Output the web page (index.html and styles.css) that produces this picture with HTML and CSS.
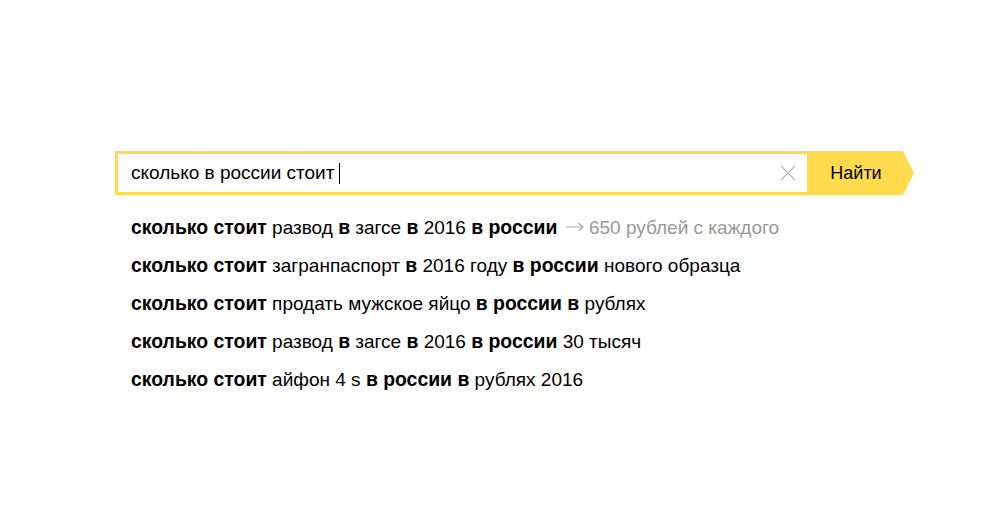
FILE: index.html
```html
<!DOCTYPE html>
<html lang="ru">
<head>
<meta charset="utf-8">
<title>Поиск</title>
<link rel="stylesheet" href="styles.css">
</head>
<body>
<div class="page">
  <form class="search">
    <div class="field">
      <span class="query">сколько в россии стоит</span><span class="caret"></span>
      <span class="clear">
        <svg width="16" height="16" viewBox="0 0 16 16"><path d="M1 1L15 15M15 1L1 15" stroke="#b3b3b3" stroke-width="1.2" fill="none"/></svg>
      </span>
    </div>
    <button class="go" type="button">Найти</button>
  </form>
  <ul class="suggest">
    <li><b>сколько стоит</b> развод <b>в</b> загсе <b>в</b> 2016 <b>в россии</b> <span class="fact"><svg class="arrow" width="18" height="10" viewBox="0 0 18 10"><path d="M0 5H17M12.5 1L17 5L12.5 9" stroke="#a6a6a6" stroke-width="1.1" fill="none"/></svg> 650 рублей с каждого</span></li>
    <li><b>сколько стоит</b> загранпаспорт <b>в</b> 2016 году <b>в россии</b> нового образца</li>
    <li><b>сколько стоит</b> продать мужское яйцо <b>в россии в</b> рублях</li>
    <li><b>сколько стоит</b> развод <b>в</b> загсе <b>в</b> 2016 <b>в россии</b> 30 тысяч</li>
    <li><b>сколько стоит</b> айфон 4 s <b>в россии в</b> рублях 2016</li>
  </ul>
</div>
</body>
</html>
```
FILE: styles.css
```css
html, body {
  margin: 0;
  padding: 0;
  background: #fff;
}
body {
  font-family: "Liberation Sans", Arial, sans-serif;
  color: #000;
}
.page {
  padding: 151px 0 0 115px;
}
.search {
  display: flex;
  height: 44px;
  margin: 0;
}
.field {
  box-sizing: border-box;
  width: 692px;
  height: 44px;
  border: 3px solid #ffdb4d;
  border-right: 0;
  display: flex;
  align-items: center;
  padding-left: 13px;
  font-size: 19px;
}
.query {
  white-space: pre;
}
.caret {
  width: 1px;
  height: 21px;
  background: #000;
  margin-left: 5px;
}
.clear {
  margin-left: auto;
  margin-right: 11px;
  display: flex;
}
.go {
  position: relative;
  width: 96px;
  height: 44px;
  border: 0;
  padding: 0 0 0 2px;
  margin: 0;
  background: #ffdb4d;
  font-family: "Liberation Sans", Arial, sans-serif;
  font-size: 18px;
  color: #000;
  cursor: pointer;
}
.go::after {
  content: "";
  position: absolute;
  left: 96px;
  top: 0;
  border-left: 11px solid #ffdb4d;
  border-top: 22px solid transparent;
  border-bottom: 22px solid transparent;
}
.suggest {
  list-style: none;
  margin: 14px 0 0 16px;
  padding: 0;
  font-size: 19px;
}
.suggest li {
  height: 38px;
  line-height: 38px;
  white-space: nowrap;
}
.suggest b {
  font-weight: bold;
  font-size: 19.4px;
  line-height: 1;
}
.fact {
  color: #999;
}
.arrow {
  vertical-align: 2px;
  margin-left: 3px;
}
```
